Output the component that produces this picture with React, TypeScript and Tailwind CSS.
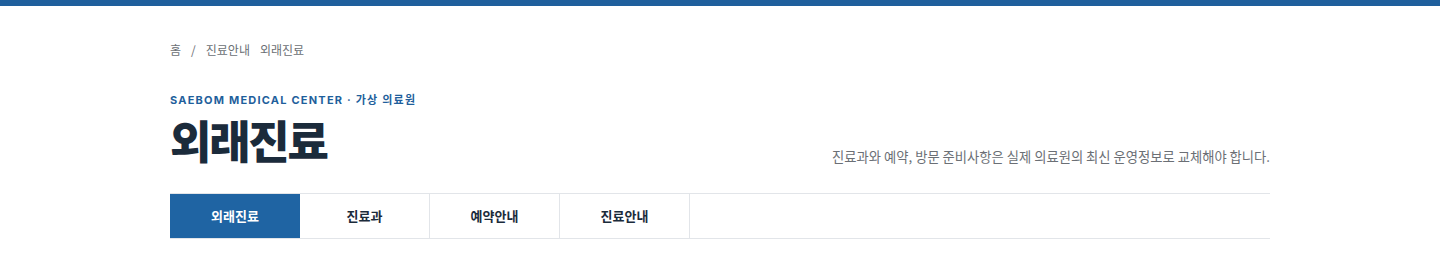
import React from "react";

const tabs = ["외래진료", "진료과", "예약안내", "진료안내"];

export default function App() {
  return (
    <div className="min-h-[268px] bg-white" style={{ fontFamily: '"Noto Sans CJK KR", "Noto Sans", sans-serif' }}>
      <div className="h-[6px] bg-[#1f5f9c]" />
      <div className="mx-auto w-[1100px]">
        <nav className="flex items-center gap-[10px] pt-[35px] text-[12px] leading-[18px] text-[#6b6f75]">
          <span>홈</span>
          <span>/</span>
          <span>진료안내</span>
          <span className="ml-[0px]">외래진료</span>
        </nav>
        <div className="mt-[34px] flex items-end justify-between">
          <div>
            <p className="text-[11px] font-bold leading-[14px] tracking-[0.11em] text-[#1f5f9c]" style={{ fontFamily: 'Inter, "Noto Sans CJK KR", sans-serif' }}>
              SAEBOM MEDICAL CENTER · 가상 의료원
            </p>
            <h1 className="mt-[6px] text-[45px] font-black leading-[54px] tracking-[-0.05em] text-[#1b2b3b]">외래진료</h1>
          </div>
          <p className="text-[13.3px] leading-[20px] text-[#6b6f75]">
            진료과와 예약, 방문 준비사항은 실제 의료원의 최신 운영정보로 교체해야 합니다.
          </p>
        </div>
        <div className="mt-[26px] flex border-y border-[#e2e5e9]">
          {tabs.map((t, i) => (
            <div
              key={t}
              className={
                i === 0
                  ? "flex h-[44px] w-[130px] items-center justify-center bg-[#1f64a3] text-[13px] font-bold text-white"
                  : "flex h-[44px] w-[130px] items-center justify-center border-r border-[#e2e5e9] text-[13px] font-bold text-[#1b2b3b]"
              }
            >
              {t}
            </div>
          ))}
        </div>
      </div>
    </div>
  );
}
